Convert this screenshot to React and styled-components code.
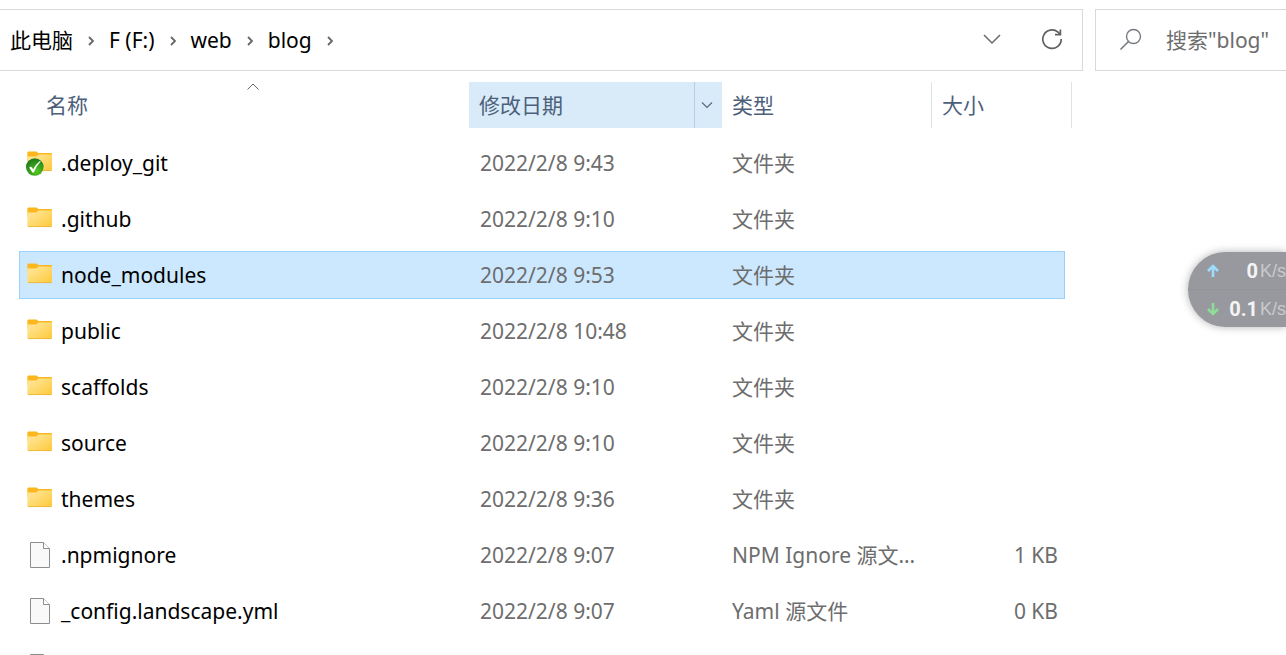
import React, { useState } from 'react';
import styled, { createGlobalStyle } from 'styled-components';

const files = [
  { name: '.deploy_git', date: '2022/2/8 9:43', type: '文件夹', icon: 'folder', synced: true },
  { name: '.github', date: '2022/2/8 9:10', type: '文件夹', icon: 'folder' },
  { name: 'node_modules', date: '2022/2/8 9:53', type: '文件夹', icon: 'folder' },
  { name: 'public', date: '2022/2/8 10:48', type: '文件夹', icon: 'folder' },
  { name: 'scaffolds', date: '2022/2/8 9:10', type: '文件夹', icon: 'folder' },
  { name: 'source', date: '2022/2/8 9:10', type: '文件夹', icon: 'folder' },
  { name: 'themes', date: '2022/2/8 9:36', type: '文件夹', icon: 'folder' },
  { name: '.npmignore', date: '2022/2/8 9:07', type: 'NPM Ignore 源文件', size: '1 KB', icon: 'file' },
  { name: '_config.landscape.yml', date: '2022/2/8 9:07', type: 'Yaml 源文件', size: '0 KB', icon: 'file' },
  { name: '', date: '', type: '', icon: 'file' },
];

const path = ['此电脑', 'F (F:)', 'web', 'blog'];

const FolderIcon = ({ synced }) => (
  <svg width="28" height="28" viewBox="0 0 28 28" aria-hidden="true">
    <defs>
      <linearGradient id="folderFront" x1="0" y1="0" x2="1" y2="1">
        <stop offset="0" stopColor="#ffe9a2" />
        <stop offset="1" stopColor="#fec93b" />
      </linearGradient>
      <radialGradient id="syncBall" cx="0.6" cy="0.75" r="0.7">
        <stop offset="0" stopColor="#55c81e" />
        <stop offset="1" stopColor="#1f7d1c" />
      </radialGradient>
    </defs>
    <path d="M1.4 3.4Q1.4 2.4 2.4 2.4H10.4L12.4 4H25Q26 4 26 5V12H1.4Z" fill="#fbb71d" />
    <path d="M1.4 7.4H10.4L12.6 5.4H26V21Q26 22 25 22H2.4Q1.4 22 1.4 21Z" fill="url(#folderFront)" />
    <path d="M2 21.6H25.4" stroke="#e9b33c" strokeWidth="0.8" />
    {synced && (
      <>
        <circle cx="8.8" cy="18" r="8.8" fill="url(#syncBall)" />
        <path d="M3.2 18.4L5 17.4L7.2 20.2Q9.8 15.4 14.2 11.8L14.6 12.4Q10.4 17 7.8 23.4H6.4Z" fill="#fff" />
      </>
    )}
  </svg>
);

const FileIcon = () => (
  <svg width="28" height="28" viewBox="0 0 28 28" aria-hidden="true">
    <path d="M4.5 1.5H17.5L23.5 7.5V26.5H4.5Z" fill="#f9f9f9" stroke="#8d8d8d" />
    <path d="M17.5 1.5V7.5H23.5" fill="#fff" stroke="#8d8d8d" />
  </svg>
);

const Chevron = () => (
  <svg width="8" height="12" viewBox="0 0 8 12" aria-hidden="true">
    <path d="M2 2L6 6L2 10" fill="none" stroke="#666" strokeWidth="1.8" />
  </svg>
);

const App = () => {
  const [selected, setSelected] = useState('node_modules');
  const [keyword, setKeyword] = useState('');

  return (
    <StWindow>
      <GlobalStyle />
      <StToolbar>
        <StAddress>
          <StPath aria-label="路径">
            {path.map((item) => (
              <React.Fragment key={item}>
                <StPathBtn type="button">{item}</StPathBtn>
                <StArrow>
                  <Chevron />
                </StArrow>
              </React.Fragment>
            ))}
          </StPath>
          <StIconBtn type="button" aria-label="以前的位置">
            <svg width="20" height="20" viewBox="0 0 20 20">
              <path d="M2 5L10 13L18 5" fill="none" stroke="#6a6a6a" strokeWidth="1.5" />
            </svg>
          </StIconBtn>
          <StIconBtn type="button" aria-label="刷新">
            <svg width="22" height="22" viewBox="0 0 22 22">
              <path d="M20.2 10A9.2 9.2 0 1 1 17 3.2L19 5.2" fill="none" stroke="#606060" strokeWidth="1.7" />
              <path d="M19.4 0.4V5.6H14" fill="none" stroke="#606060" strokeWidth="1.7" />
            </svg>
          </StIconBtn>
        </StAddress>
        <StSearch>
          <svg width="24" height="24" viewBox="0 0 24 24" aria-hidden="true">
            <circle cx="14.5" cy="8.5" r="7" fill="none" stroke="#737a82" strokeWidth="1.4" />
            <path d="M9.5 13.5L1.5 21.5" stroke="#737a82" strokeWidth="1.6" />
          </svg>
          <input
            aria-label="搜索"
            placeholder={'搜索"blog"'}
            value={keyword}
            onChange={(e) => setKeyword(e.target.value)}
          />
        </StSearch>
      </StToolbar>

      <StTable>
        <thead>
          <StHeadRow>
            <StTh>
              名称
              <StSort width="12" height="8" viewBox="0 0 12 8">
                <path d="M0.5 6.5L6 1L11.5 6.5" fill="none" stroke="#666" />
              </StSort>
            </StTh>
            <StTh $active>
              修改日期
              <StFilter type="button" aria-label="筛选">
                <svg width="12" height="8" viewBox="0 0 12 8">
                  <path d="M1 1.5L6 6.5L11 1.5" fill="none" stroke="#566b80" strokeWidth="1.2" />
                </svg>
              </StFilter>
            </StTh>
            <StTh $line>类型</StTh>
            <StTh $line>大小</StTh>
          </StHeadRow>
        </thead>
        <tbody>
          {files.map((file) => (
            <StRow
              key={file.name}
              $selected={file.name === selected}
              onClick={() => setSelected(file.name)}
            >
              <StName>
                {file.icon === 'folder' ? <FolderIcon synced={file.synced} /> : <FileIcon />}
                {file.name}
              </StName>
              <StTd>{file.date}</StTd>
              <StTd>{file.type}</StTd>
              <StTd $right>{file.size}</StTd>
            </StRow>
          ))}
        </tbody>
      </StTable>

      <StSpeed>
        <StSpeedRow>
          <svg width="14" height="14" viewBox="0 0 14 14">
            <path d="M7 13V2.5M2 7L7 2L12 7" fill="none" stroke="#9bdcff" strokeWidth="2.6" />
          </svg>
          <b>0</b>
          <span>K/s</span>
        </StSpeedRow>
        <StSpeedRow>
          <svg width="14" height="14" viewBox="0 0 14 14">
            <path d="M7 1V11.5M2 7L7 12L12 7" fill="none" stroke="#8ddc98" strokeWidth="2.6" />
          </svg>
          <b>0.1</b>
          <span>K/s</span>
        </StSpeedRow>
      </StSpeed>
    </StWindow>
  );
};

export default App;

const GlobalStyle = createGlobalStyle`
  * {
    box-sizing: border-box;
  }
  body {
    margin: 0;
    background-color: #fff;
    color: #000;
    font-family: 'Noto Sans', 'Noto Sans CJK SC', sans-serif;
    font-size: 21px;
    line-height: 30px;
  }
  button, input {
    font: inherit;
    border: none;
    background: none;
    padding: 0;
  }
  svg {
    display: block;
    flex-shrink: 0;
  }
`;

const StWindow = styled.div`
  position: relative;
  height: 100vh;
  overflow: hidden;
`;

const StToolbar = styled.div`
  display: flex;
  gap: 12px;
  padding-top: 9px;
`;

const StAddress = styled.div`
  flex: 1;
  display: flex;
  align-items: center;
  height: 62px;
  border: 1px solid #d9d9d9;
  border-left: none;
`;

const StPath = styled.nav`
  flex: 1;
  display: flex;
  align-items: center;
  padding-left: 10px;
`;

const StPathBtn = styled.button`
  color: #000;
  white-space: nowrap;
`;

const StArrow = styled.span`
  width: 36px;
  padding-top: 1px;
  display: flex;
  justify-content: center;
`;

const StIconBtn = styled.button`
  width: 60px;
  height: 60px;
  display: flex;
  align-items: center;
  justify-content: center;
`;

const StSearch = styled.label`
  width: 191px;
  height: 62px;
  display: flex;
  align-items: center;
  gap: 23px;
  padding-left: 23px;
  border: 1px solid #d9d9d9;
  border-right: none;

  input {
    flex: 1;
    min-width: 0;
    outline: none;
  }
  input::placeholder {
    color: #6d6d6d;
    opacity: 1;
  }
`;

const StTable = styled.table`
  display: block;
  padding: 11px 0 0 19px;

  thead, tbody {
    display: block;
  }
  tbody {
    padding-top: 11px;
  }
`;

const StHeadRow = styled.tr`
  display: grid;
  grid-template-columns: 433px 253px 210px 140px;
  padding-left: 17px;
`;

const StTh = styled.th`
  position: relative;
  display: flex;
  align-items: center;
  height: 46px;
  padding: 0 0 0 10px;
  color: #4c607a;
  font-weight: 400;
  background-color: ${({ $active }) => ($active ? '#d9ebf9' : 'transparent')};
  border-right: ${({ $line }) => ($line ? '1px solid #e2e2e2' : 'none')};
`;

const StSort = styled.svg`
  position: absolute;
  top: 1px;
  left: 50%;
  margin-left: -6px;
`;

const StFilter = styled.button`
  width: 28px;
  height: 46px;
  margin-left: auto;
  padding-right: 4px;
  display: flex;
  align-items: center;
  justify-content: center;
  border-left: 1px solid #b9cfe0;
`;

const StRow = styled.tr`
  display: grid;
  grid-template-columns: 450px 252px 209px 1fr;
  width: 1046px;
  height: 48px;
  margin-bottom: 8px;
  border: 1px solid ${({ $selected }) => ($selected ? '#99d1ff' : 'transparent')};
  background-color: ${({ $selected }) => ($selected ? '#cce8ff' : 'transparent')};
  cursor: default;
`;

const StTd = styled.td`
  padding: 8px ${({ $right }) => ($right ? '6px' : '12px')} 8px 10px;
  color: #6d6d6d;
  text-align: ${({ $right }) => ($right ? 'right' : 'left')};
  white-space: nowrap;
  overflow: hidden;
  text-overflow: ellipsis;
`;

const StName = styled.td`
  display: flex;
  align-items: center;
  gap: 7px;
  padding: 0 0 0 6px;
`;

const StSpeed = styled.div`
  position: absolute;
  top: 252px;
  right: 0;
  width: 98px;
  border-radius: 38px 0 0 38px;
  background-color: #98999e;
  box-shadow: 0 0 8px rgba(0, 0, 0, 0.3);
  overflow: hidden;
`;

const StSpeedRow = styled.div`
  display: flex;
  align-items: center;
  height: 37px;
  padding-left: 18px;
  color: #c9cacd;
  font-family: 'Liberation Sans', sans-serif;
  font-size: 18px;

  & + & {
    height: 38px;
    border-top: 1px solid #939499;
  }
  b {
    margin-left: auto;
    margin-right: 2px;
    color: #f4f4f5;
    font-family: Roboto, sans-serif;
    font-size: 20px;
    font-weight: 700;
  }
`;
